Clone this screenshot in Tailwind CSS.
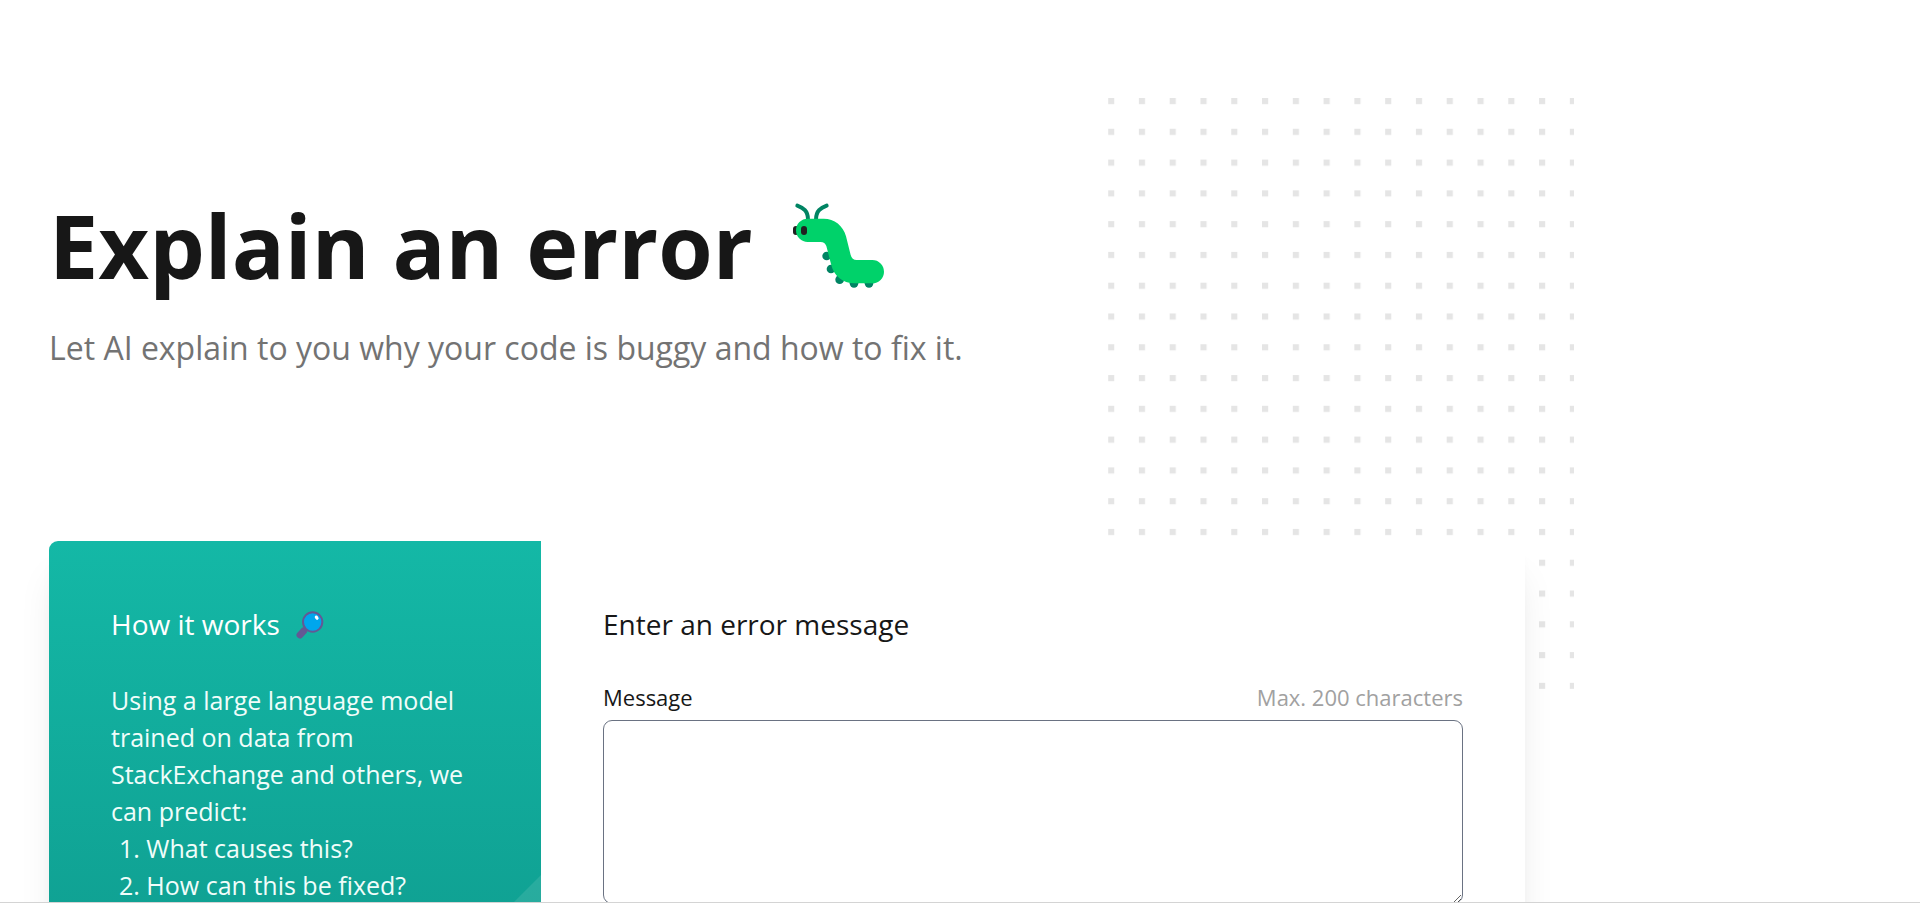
<!DOCTYPE html>
<html lang="en">
<head>
  <meta charset="UTF-8" />
  <meta name="viewport" content="width=device-width, initial-scale=1.0" />
  <title>Explain an error</title>
  <script src="https://cdn.jsdelivr.net/npm/@tailwindcss/browser@4"></script>
</head>
<body class="h-screen overflow-hidden border-b border-neutral-300 bg-white font-['Open_Sans','Noto_Sans',sans-serif] text-neutral-900">
  <main class="relative max-w-[1574px] pr-[49px] pl-[49px]">
    <!-- Dot pattern -->
    <div class="absolute right-0 top-[98px] w-[466px] overflow-hidden" aria-hidden="true">
      <svg class="max-w-none" width="622" height="591" fill="none" viewBox="0 0 404 384">
        <defs>
          <pattern id="dots" x="0" y="0" width="20" height="20" patternUnits="userSpaceOnUse">
            <rect width="4" height="4" class="fill-neutral-200" />
          </pattern>
        </defs>
        <rect width="404" height="384" fill="url(#dots)" />
      </svg>
    </div>

    <header class="relative pt-[196px]">
      <h1 class="flex items-center gap-10 text-[88px] leading-[98px] font-bold">
        Explain an error
        <svg width="92" height="85" viewBox="60 42 276 255" fill="none" aria-hidden="true">
          <rect x="60" y="111" width="18" height="27" rx="9" fill="#212121" />
          <g fill="#008463">
            <circle cx="161" cy="201" r="13" />
            <circle cx="174" cy="240" r="13" />
            <circle cx="200" cy="272" r="13" />
            <circle cx="243" cy="283" r="13" />
            <circle cx="288" cy="283" r="13" />
          </g>
          <path d="M73 50C91 57 105 65 105 92M161 50C143 57 129 65 129 92" stroke="#008463" stroke-width="12" stroke-linecap="round" />
          <path d="M104 89H152C184 89 211 110 219 142L233 198C235 207 242 213 251 213H298A35 35 0 0 1 298 283H245C208 283 182 260 174 225L160 171C158 164 151 159 143 159H104A35 35 0 0 1 104 89Z" fill="#00D26A" />
          <rect x="84" y="111" width="18" height="27" rx="9" fill="#212121" />
        </svg>
      </h1>
      <p class="mt-[30px] text-[32px] leading-[48px] text-neutral-500">Let AI explain to you why your code is buggy and how to fix it.</p>
    </header>

    <section class="relative mt-[169px] grid min-h-[600px] grid-cols-3 rounded-[9px] bg-white shadow-[0_31px_38px_-8px_rgba(0,0,0,0.1),0_12px_15px_-9px_rgba(0,0,0,0.1)]">
      <div class="relative overflow-hidden rounded-l-[9px] bg-linear-to-b from-[#14b8a6] to-[#0d9488] px-[62px] py-[62px] text-white">
        <svg class="absolute right-0 bottom-0" width="266" height="266" viewBox="0 0 266 266" aria-hidden="true">
          <path d="M266 0V266H0Z" fill="#fff" fill-opacity="0.1" />
        </svg>
        <h2 class="flex items-center gap-4 text-[28px] leading-[43px]">
          How it works
          <svg width="28" height="28" viewBox="800 274 84 84" fill="none" aria-hidden="true">
            <path d="M812 346L823 334" stroke="#635994" stroke-width="21" stroke-linecap="round" />
            <path d="M825 332L832 325" stroke="#635994" stroke-width="8" />
            <circle cx="850" cy="307" r="29" fill="#00A6ED" stroke="#635994" stroke-width="6" />
            <ellipse cx="862" cy="294" rx="5" ry="7" transform="rotate(-35 862 294)" fill="#fff" />
          </svg>
        </h2>
        <div class="relative mt-9 text-[25px] leading-[37px] text-teal-50">
          <p>Using a large language model trained on data from StackExchange and others, we can predict:</p>
          <ol class="list-inside list-decimal pl-2">
            <li>What causes this?</li>
            <li>How can this be fixed?</li>
          </ol>
        </div>
      </div>

      <form class="col-span-2 px-[62px] py-[62px]">
        <h2 class="text-[28px] leading-[43px]">Enter an error message</h2>
        <div class="mt-9 flex justify-between text-[22px] leading-[31px]">
          <label for="message">Message</label>
          <span id="message-max" class="text-neutral-400">Max. 200 characters</span>
        </div>
        <textarea id="message" name="message" maxlength="200" aria-describedby="message-max" class="mt-[7px] block h-[184px] w-full rounded-[9px] border border-gray-500 bg-white px-6 py-4 text-[22px]"></textarea>
      </form>
    </section>
  </main>
</body>
</html>
